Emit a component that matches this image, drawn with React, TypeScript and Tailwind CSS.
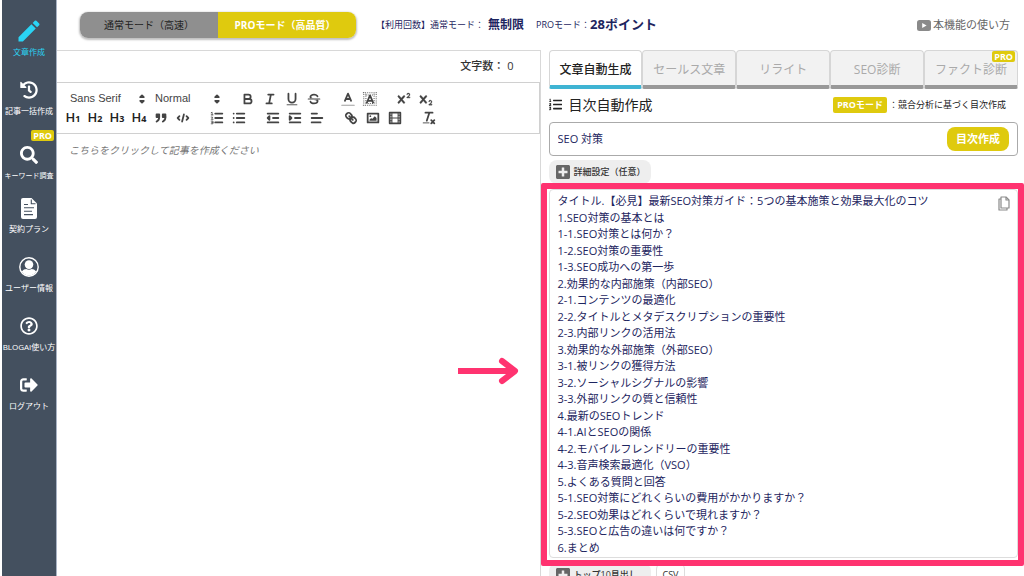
import { useState } from 'react'
import type { ReactNode } from 'react'
import { clsx } from 'clsx'
import { FaHistory, FaListOl, FaPlusSquare, FaRegQuestionCircle, FaSearch, FaSignOutAlt } from 'react-icons/fa'
import { MdEdit } from 'react-icons/md'

const OUTLINE = `タイトル.【必見】最新SEO対策ガイド：5つの基本施策と効果最大化のコツ
1.SEO対策の基本とは
1-1.SEO対策とは何か？
1-2.SEO対策の重要性
1-3.SEO成功への第一歩
2.効果的な内部施策（内部SEO）
2-1.コンテンツの最適化
2-2.タイトルとメタデスクリプションの重要性
2-3.内部リンクの活用法
3.効果的な外部施策（外部SEO）
3-1.被リンクの獲得方法
3-2.ソーシャルシグナルの影響
3-3.外部リンクの質と信頼性
4.最新のSEOトレンド
4-1.AIとSEOの関係
4-2.モバイルフレンドリーの重要性
4-3.音声検索最適化（VSO）
5.よくある質問と回答
5-1.SEO対策にどれくらいの費用がかかりますか？
5-2.SEO効果はどれくらいで現れますか？
5-3.SEOと広告の違いは何ですか？
6.まとめ`

function PlanIcon() {
  return (
    <svg viewBox="0 0 16 21" className="h-[21px] w-4" fill="currentColor">
      <path d="M2 0h8.500L16 5.500V19a2 2 0 0 1-2 2H2a2 2 0 0 1-2-2V2a2 2 0 0 1 2-2Z" />
      <path d="M10.300 1.500v4.200h4.200M3 6.500h4M3 9.800h10M3 13.200h8M3 16.600h9" fill="none" stroke="#44505f" strokeWidth="1.100" />
    </svg>
  )
}

function UserIcon() {
  return (
    <svg viewBox="0 0 20 20" className="size-5">
      <circle cx="10" cy="10" r="9.2" fill="none" stroke="currentColor" strokeWidth="1.4" />
      <circle cx="10" cy="7.6" r="4.3" fill="currentColor" />
      <path d="M2.8 14.6C4 12.7 6 12 7.2 12c1.8.9 3.8.9 5.6 0 1.2 0 3.2.7 4.4 2.6A9 9 0 0 1 10 18.8 9 9 0 0 1 2.8 14.6Z" fill="currentColor" />
    </svg>
  )
}

interface NavItem {
  label: string
  icon: ReactNode
  active?: boolean
  pro?: boolean
}

const NAV_ITEMS: NavItem[] = [
  { label: '文章作成', icon: <MdEdit className="size-7" />, active: true },
  { label: '記事一括作成', icon: <FaHistory className="size-[18px]" /> },
  { label: 'キーワード調査', icon: <FaSearch className="size-[18px]" />, pro: true },
  { label: '契約プラン', icon: <PlanIcon /> },
  { label: 'ユーザー情報', icon: <UserIcon /> },
  { label: 'BLOGAI使い方', icon: <FaRegQuestionCircle className="size-[18px]" /> },
  { label: 'ログアウト', icon: <FaSignOutAlt className="size-[18px]" /> },
]

function Sidebar() {
  return (
    <nav className="w-[55px] shrink-0 border-r border-[#a9b3c4] bg-[#44505f] pt-5">
      <ul>
        {NAV_ITEMS.map((item) => (
          <li key={item.label} className="h-[59px]">
            <a
              href="#"
              className={clsx(
                'relative flex flex-col items-center gap-1 leading-3 whitespace-nowrap',
                item.active ? 'text-[#2ad4f5]' : 'text-white',
                item.pro ? 'pt-1.5 text-[7px]' : 'text-[8px]',
              )}
            >
              {item.pro && (
                <span className="absolute -top-2 right-0.5 rounded-xs bg-[#dfca0e] px-0.5 text-[9px] leading-[11px] font-bold">PRO</span>
              )}
              <span className="flex h-[22px] items-center">{item.icon}</span>
              {item.label}
            </a>
          </li>
        ))}
      </ul>
    </nav>
  )
}

function Header() {
  const [pro, setPro] = useState(true)
  return (
    <header className="flex h-[50px] shrink-0 items-center pr-3.5 pl-[23px] text-[#1d2560]">
      <div className="flex h-[26px] overflow-hidden rounded-lg text-[10px] shadow-[0_1px_2px_1px_rgba(0,0,0,0.25)]">
        <button
          type="button"
          onClick={() => setPro(false)}
          aria-pressed={!pro}
          className="w-[138px] bg-[#8f8f8f] text-[#222]"
        >
          通常モード（高速）
        </button>
        <button
          type="button"
          onClick={() => setPro(true)}
          aria-pressed={pro}
          className="w-[138px] bg-[#dfca0e] pr-1 font-bold text-white"
        >
          PROモード（高品質）
        </button>
      </div>
      <p className="ml-5 flex items-center text-[9px]">
        【利用回数】通常モード：<strong className="ml-1 text-[12px]">無制限</strong>
        <span className="ml-3">PROモード：</span>
        <strong className="text-[13px]">28ポイント</strong>
      </p>
      <a href="#" className="ml-auto flex items-center gap-0.5 text-[11px] text-[#666]">
        <svg viewBox="0 0 14 11" className="h-[11px] w-3.5">
          <rect width="14" height="11" rx="2.5" fill="#8a8a8a" />
          <path d="M5.2 3v5l4.4-2.5Z" fill="#fff" />
        </svg>
        本機能の使い方
      </a>
    </header>
  )
}

const SUPER_X =
  'M9.651,5.241a1,1,0,0,0-1.41.108L6,7.964,3.759,5.349a1,1,0,1,0-1.519,1.3L4.683,9.5,2.241,12.35a1,1,0,1,0,1.519,1.3L6,11.036,8.241,13.65a1,1,0,0,0,1.519-1.3L7.317,9.5,9.759,6.651A1,1,0,0,0,9.651,5.241Z'
const SUPER_TWO =
  'M15.5,7H13.861a4.015,4.015,0,0,0,1.914-2.975,1.8,1.8,0,0,0-1.6-1.751A1.922,1.922,0,0,0,12.021,3.7a.5.5,0,1,0,.957.291,.917.917,0,0,1,1.053-.725.81.81,0,0,1,.744.762c0,1.077-1.164,1.925-1.934,2.486A1.423,1.423,0,0,0,12,7.5a.5.5,0,0,0,.5.5h3A.5.5,0,0,0,15.5,7Z'

interface Tool {
  name: string
  icon: ReactNode
}

function glyph(children: ReactNode) {
  return (
    <svg viewBox="0 0 18 18" className="size-4" fill="none" stroke="#444" strokeWidth="2" strokeLinecap="round" strokeLinejoin="round">
      {children}
    </svg>
  )
}

const TEXT_TOOLS: Tool[][] = [
  [
    { name: '太字', icon: glyph(<path d="M5 4h4.5a2.5 2.5 0 0 1 0 5H5ZM5 9h5.5a2.5 2.5 0 0 1 0 5H5Z" />) },
    { name: '斜体', icon: glyph(<path d="M7 4h6M5 14h6M8 14l2-10" />) },
    { name: '下線', icon: glyph(<><path d="M5 3v6a4 4 0 0 0 8 0V3" /><path d="M3.5 15.5h11" strokeWidth="1" /></>) },
    {
      name: '取り消し線',
      icon: glyph(
        <>
          <path d="M2.5 9h13" strokeWidth="1.2" />
          <g fill="#444" stroke="none">
            <path d="M9.007,8C6.542,7.791,6,7.519,6,6.5,6,5.792,7.283,5,9,5c1.571,0,2.765.679,2.969,1.309a1,1,0,0,0,1.9-.617C13.356,4.106,11.354,3,9,3,6.2,3,4,4.538,4,6.5a3.2,3.2,0,0,0,.5,1.843Z" />
            <path d="M8.984,10C11.457,10.208,12,10.479,12,11.5c0,.708-1.283,1.5-3,1.5-1.571,0-2.765-.679-2.969-1.309a1,1,0,1,0-1.9.617C4.644,13.894,6.646,15,9,15c2.8,0,5-1.538,5-3.5a3.2,3.2,0,0,0-.5-1.843Z" />
          </g>
        </>,
      ),
    },
  ],
  [
    { name: '文字色', icon: glyph(<><path d="M5.5 11 9 3l3.500 8M6.400 9h5.200" /><path d="M2 16h14" strokeWidth="1.200" opacity="0.5" /></>) },
    {
      name: '背景色',
      icon: glyph(
        <>
          <g strokeWidth="1.200" strokeDasharray="1.200 1.200" strokeLinecap="butt" opacity="0.8">
            <path d="M1 2h16M1 16h16M2 1v16M16 1v16M4.400 3v12M13.600 3v12M4 4.400h10M4 14h10" />
          </g>
          <path d="M5.500 13 9 5l3.500 8M6.400 11h5.200" />
        </>,
      ),
    },
  ],
  [
    { name: '上付き', icon: glyph(<g fill="#444" stroke="#444" strokeWidth="0.3"><path d={SUPER_X} /><path d={SUPER_TWO} /></g>) },
    { name: '下付き', icon: glyph(<g fill="#444" stroke="#444" strokeWidth="0.3"><path d={SUPER_X} /><path d={SUPER_TWO} transform="translate(0 8)" /></g>) },
  ],
]

const heading = (level: number) => (
  <span className="text-[13px] leading-4 font-semibold text-[#222]">
    H<span className="text-[9px] font-bold">{level}</span>
  </span>
)

const BLOCK_TOOLS: Tool[][] = [
  [
    { name: '見出し1', icon: heading(1) },
    { name: '見出し2', icon: heading(2) },
    { name: '見出し3', icon: heading(3) },
    { name: '見出し4', icon: heading(4) },
    {
      name: '引用',
      icon: glyph(
        <>
          <g fill="#444">
            <rect x="4" y="5" width="3" height="3" />
            <rect x="11" y="5" width="3" height="3" />
          </g>
          <path d="M7 8c0 4-3 5-3 5M14 8c0 4-3 5-3 5" />
        </>,
      ),
    },
    { name: 'コード', icon: glyph(<path d="M5 7 3 9l2 2M13 7l2 2-2 2M10 5 8 13" />) },
  ],
  [
    {
      name: '番号付きリスト',
      icon: glyph(
        <>
          <path d="M7 4h8M7 9h8M7 14h8" />
          <path d="M2.500 3l1-.500V5.500M2.500 5.500h2M2.500 8h1.500v1L2.500 10.500h2M2.500 12.500h2v3h-2M3 14h1.500" strokeWidth="0.900" />
        </>,
      ),
    },
    { name: '箇条書き', icon: glyph(<path d="M6.500 4H15M6.500 9H15M6.500 14H15M3 4h0M3 9h0M3 14h0" />) },
  ],
  [
    { name: 'インデント解除', icon: glyph(<><path d="M3 14h12M3 4h12M9 9h6" /><path d="M5 7v4L3 9Z" fill="#444" /></>) },
    { name: 'インデント', icon: glyph(<><path d="M3 14h12M3 4h12M9 9h6" /><path d="M3 7v4l2-2Z" fill="#444" /></>) },
    { name: '配置', icon: glyph(<path d="M3 9h12M3 14h10M3 4h6" />) },
  ],
  [
    {
      name: 'リンク',
      icon: glyph(
        <path d="M7 7l4 4M8.900 4.577a3.476 3.476 0 0 1 .36 4.679A3.476 3.476 0 0 1 4.577 8.900C3.185 7.500 2.035 6.400 4.217 4.217S7.500 3.185 8.900 4.577ZM13.423 9.100a3.476 3.476 0 0 0-4.679-.36 3.476 3.476 0 0 0 .36 4.679c1.392 1.392 2.500 2.542 4.679.36S14.815 10.500 13.423 9.100Z" />,
      ),
    },
    {
      name: '画像',
      icon: glyph(
        <>
          <rect x="3" y="4" width="12" height="10" />
          <g fill="#444" stroke="none">
            <circle cx="6" cy="7" r="1" />
            <path d="M5 12v-1l2-2 1 1 3-3 2 2v3Z" />
          </g>
        </>,
      ),
    },
    {
      name: '動画',
      icon: glyph(
        <>
          <rect x="3" y="3" width="12" height="12" />
          <path d="M5.500 3v12M12.500 3v12M6 9h6M3 6h2M3 9h2M3 12h2M13 6h2M13 9h2M13 12h2" strokeWidth="1.200" />
        </>,
      ),
    },
  ],
  [
    { name: '書式クリア', icon: glyph(<><path d="M5 3h8M6.500 12 9.400 3M11.500 11.500l3.500 3.500M15 11.500 11.500 15" /><path d="M2.500 14.500h6.500" strokeWidth="1" /></>) },
  ],
]

function ToolGroups({ groups }: { groups: Tool[][] }) {
  return groups.map((group) => (
    <div key={group[0].name} className="flex">
      {group.map((tool) => (
        <button key={tool.name} type="button" aria-label={tool.name} className="flex h-[19px] w-[22px] items-center justify-center">
          {tool.icon}
        </button>
      ))}
    </div>
  ))
}

function Picker({ label, options }: { label: string; options: string[] }) {
  return (
    <label className="relative flex items-center">
      <select
        aria-label={label}
        className="w-full appearance-none bg-transparent font-['Liberation_Sans',Arimo,sans-serif] text-[11px] font-medium text-[#444]"
      >
        {options.map((option) => (
          <option key={option}>{option}</option>
        ))}
      </select>
      <svg viewBox="0 0 18 18" className="pointer-events-none absolute right-0 size-4" fill="#444" stroke="#444" strokeWidth="2" strokeLinejoin="round">
        <path d="M7 11l2 2 2-2ZM7 7l2-2 2 2Z" />
      </svg>
    </label>
  )
}

function Editor() {
  return (
    <section className="flex min-w-0 flex-col border-t border-r border-[#d8d8d8]">
      <div className="flex h-[31px] items-center justify-end pr-[26px] text-[11px] font-medium text-[#333]">文字数： 0</div>
      <div className="border-y border-r border-[#d0d0d0] py-1.5 pl-[5px]">
        <div className="flex gap-3">
          <div className="grid w-[163px] grid-cols-[80px_1fr] gap-[5px] pl-2">
            <Picker label="フォント" options={['Sans Serif', 'Serif', 'Monospace']} />
            <Picker label="文字サイズ" options={['Normal', 'Small', 'Large', 'Huge']} />
          </div>
          <ToolGroups groups={TEXT_TOOLS} />
        </div>
        <div className="flex gap-3">
          <ToolGroups groups={BLOCK_TOOLS} />
        </div>
      </div>
      <textarea
        aria-label="記事本文"
        placeholder="こちらをクリックして記事を作成ください"
        className="w-full flex-1 resize-none px-3 py-2 text-[10px] leading-4 outline-none placeholder:text-[#777] placeholder:italic"
      />
    </section>
  )
}

const TABS = ['文章自動生成', 'セールス文章', 'リライト', 'SEO診断', 'ファクト診断']

function Tabs() {
  const [current, setCurrent] = useState(TABS[0])
  return (
    <div role="tablist" className="grid h-[39px] grid-cols-5">
      {TABS.map((tab) => (
        <button
          key={tab}
          type="button"
          role="tab"
          aria-selected={tab === current}
          onClick={() => setCurrent(tab)}
          className={clsx(
            'relative rounded-t-sm rounded-b-xs border border-b-4 pt-1 text-[12px] whitespace-nowrap',
            tab === current
              ? 'border-[#d6d6d6] border-b-[#3fb4d3] bg-white font-medium text-[#222]'
              : 'border-[#d6d6d6] border-b-[#999] bg-[#f2f2f2] text-[#aaa]',
          )}
        >
          {tab}
          {tab === 'ファクト診断' && (
            <span className="absolute top-0 right-0.5 rounded-xs bg-[#dfca0e] px-0.5 text-[9px] leading-[11px] font-bold text-white">PRO</span>
          )}
        </button>
      ))}
    </div>
  )
}

function PanelButton({ children }: { children: ReactNode }) {
  return (
    <button type="button" className="flex h-6 w-[102px] items-center gap-[3px] rounded-lg bg-[#eee] pl-1.5 text-[9px] font-medium whitespace-nowrap text-[#333]">
      <FaPlusSquare className="size-4 shrink-0 text-[#666]" />
      {children}
    </button>
  )
}

// Pink marker drawn over the outline, with an arrow pointing at it from the editor
function Callout() {
  return (
    <div className="pointer-events-none absolute -top-1.5 -right-1.5 -bottom-2 -left-2 rounded-xs border-6 border-[#ff3370]">
      <svg viewBox="0 0 62 28" className="absolute top-[49%] right-full mr-7 h-7 w-[62px] -translate-y-1/2" fill="none" stroke="#ff3370" strokeWidth="6">
        <path d="M1 14h52" />
        <path d="M45 4 58 14 45 24" strokeLinecap="round" strokeLinejoin="round" />
      </svg>
    </div>
  )
}

function OutlinePanel() {
  return (
    <section className="min-w-0 pr-1.5 pl-2">
      <Tabs />
      <div className="flex h-[33px] items-center pb-0.5">
        <FaListOl className="size-[13px] text-[#222]" />
        <h2 className="ml-[7px] text-[14px] text-[#222]">目次自動作成</h2>
        <p className="ml-auto flex items-center gap-0.5 pr-3 text-[9px] text-[#222]">
          <span className="rounded-xs bg-[#dfca0e] px-1 leading-4 font-bold text-white">PROモード</span>
          ：競合分析に基づく目次作成
        </p>
      </div>
      <form className="flex h-[34px] items-center rounded-sm border border-[#aaa] pr-2 pl-2" onSubmit={(e) => e.preventDefault()}>
        <input type="text" aria-label="キーワード" defaultValue="SEO 対策" className="min-w-0 flex-1 text-[11px] text-[#1d2560] outline-none" />
        <button type="submit" className="h-6 w-[62px] rounded-lg bg-[#dfca0e] text-[11px] font-bold text-white">
          目次作成
        </button>
      </form>
      <div className="mt-1">
        <PanelButton>詳細設定（任意）</PanelButton>
      </div>
      <div className="relative mt-[5px]">
        <textarea
          aria-label="目次"
          rows={22}
          defaultValue={OUTLINE}
          className="block w-full resize-none overflow-hidden rounded-sm border border-[#ddd] px-2 pt-[3px] pb-px text-[11px] leading-normal text-[#1d2560] outline-none"
        />
        <button type="button" aria-label="コピー" className="absolute top-[7px] right-2">
          <svg viewBox="0 0 12 15" className="h-[15px] w-3" fill="none" stroke="#8a8a8a" strokeWidth="1.2" strokeLinejoin="round">
            <path d="M3 1h5l3 3v8H3Z" />
            <path d="M8 1v3h3M3 3H1v11h8v-2" />
          </svg>
        </button>
        <Callout />
      </div>
      <div className="mt-[5px] flex gap-[5px]">
        <PanelButton>トップ10見出し</PanelButton>
        <button type="button" className="h-6 rounded-md border border-[#ddd] px-1.5 text-[9px] text-[#333]">
          CSV
        </button>
      </div>
    </section>
  )
}

export default function App() {
  return (
    <div
      lang="ja"
      className="flex h-screen overflow-hidden bg-white pl-0.5 font-['Open_Sans','Noto_Sans_CJK_JP',sans-serif]"
    >
      <Sidebar />
      <div className="flex min-w-0 flex-1 flex-col">
        <Header />
        <main className="grid min-h-0 flex-1 grid-cols-2">
          <Editor />
          <OutlinePanel />
        </main>
      </div>
    </div>
  )
}
